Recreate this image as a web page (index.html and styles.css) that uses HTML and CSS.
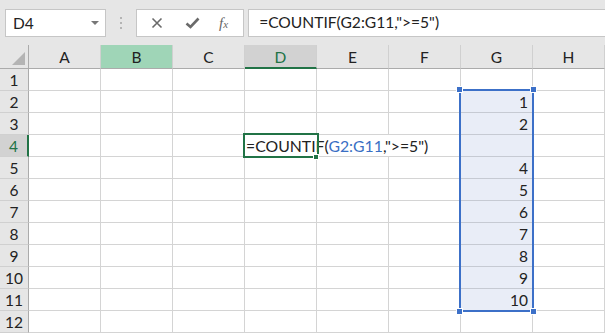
FILE: index.html
```html
<!DOCTYPE html>
<html>
<head>
<meta charset="utf-8">
<link rel="stylesheet" href="styles.css">
</head>
<body>
<div class="app">
  <div class="toolbar">
    <div class="namebox"><span class="nb-text">D4</span><span class="caret"></span></div>
    <div class="grip"><i></i><i></i><i></i></div>
    <div class="fxbox">
      <svg class="ic ic-x" width="12" height="12" viewBox="0 0 12 12"><path d="M1.5 1.5 L10.5 10.5 M10.5 1.5 L1.5 10.5" stroke="#6a6a6a" stroke-width="1.6" fill="none"/></svg>
      <svg class="ic ic-ok" width="15" height="12" viewBox="0 0 15 12"><path d="M1.5 6.5 L5.5 10 L13.5 1.5" stroke="#6a6a6a" stroke-width="2.6" fill="none"/></svg>
      <span class="fx">f<span class="fx-x">x</span></span>
    </div>
    <div class="formula">=COUNTIF(G2:G11,"&gt;=5")</div>
  </div>
  <div class="sheet">
    <div class="corner"><span class="tri"></span></div>
    <div class="ch">A</div><div class="ch ch-hl">B</div><div class="ch">C</div><div class="ch ch-sel">D</div><div class="ch">E</div><div class="ch">F</div><div class="ch">G</div><div class="ch">H</div>

    <div class="rh">1</div><div class="c"></div><div class="c"></div><div class="c"></div><div class="c"></div><div class="c"></div><div class="c"></div><div class="c"></div><div class="c"></div>
    <div class="rh">2</div><div class="c"></div><div class="c"></div><div class="c"></div><div class="c"></div><div class="c"></div><div class="c"></div><div class="c g">1</div><div class="c"></div>
    <div class="rh">3</div><div class="c"></div><div class="c"></div><div class="c"></div><div class="c"></div><div class="c"></div><div class="c"></div><div class="c g">2</div><div class="c"></div>
    <div class="rh rh-sel">4</div><div class="c"></div><div class="c"></div><div class="c"></div><div class="c"></div><div class="c"></div><div class="c"></div><div class="c g"></div><div class="c"></div>
    <div class="rh">5</div><div class="c"></div><div class="c"></div><div class="c"></div><div class="c"></div><div class="c"></div><div class="c"></div><div class="c g">4</div><div class="c"></div>
    <div class="rh">6</div><div class="c"></div><div class="c"></div><div class="c"></div><div class="c"></div><div class="c"></div><div class="c"></div><div class="c g">5</div><div class="c"></div>
    <div class="rh">7</div><div class="c"></div><div class="c"></div><div class="c"></div><div class="c"></div><div class="c"></div><div class="c"></div><div class="c g">6</div><div class="c"></div>
    <div class="rh">8</div><div class="c"></div><div class="c"></div><div class="c"></div><div class="c"></div><div class="c"></div><div class="c"></div><div class="c g">7</div><div class="c"></div>
    <div class="rh">9</div><div class="c"></div><div class="c"></div><div class="c"></div><div class="c"></div><div class="c"></div><div class="c"></div><div class="c g">8</div><div class="c"></div>
    <div class="rh">10</div><div class="c"></div><div class="c"></div><div class="c"></div><div class="c"></div><div class="c"></div><div class="c"></div><div class="c g">9</div><div class="c"></div>
    <div class="rh">11</div><div class="c"></div><div class="c"></div><div class="c"></div><div class="c"></div><div class="c"></div><div class="c"></div><div class="c g">10</div><div class="c"></div>
    <div class="rh">12</div><div class="c"></div><div class="c"></div><div class="c"></div><div class="c"></div><div class="c"></div><div class="c"></div><div class="c"></div><div class="c"></div>

    <div class="editor">=COUNTIF(<span class="ref">G2:G11</span>,"&gt;=5")</div>
    <div class="active"></div>
    <div class="fill-handle"></div>
    <div class="range">
      <span class="h h-tl"></span><span class="h h-tr"></span><span class="h h-bl"></span><span class="h h-br"></span>
    </div>
  </div>
</div>
</body>
</html>
```

FILE: styles.css
```css
* { box-sizing: border-box; }
html, body { margin: 0; padding: 0; }
body {
  width: 605px;
  height: 333px;
  overflow: hidden;
  background: #ffffff;
  font-family: Lato, "Liberation Sans", sans-serif;
  color: #222;
}
.app { width: 605px; height: 333px; overflow: hidden; }

.toolbar {
  height: 45px;
  background: #e6e6e6;
  display: flex;
  align-items: flex-start;
  padding-top: 9px;
}
.namebox {
  margin-left: 5px;
  width: 102px;
  height: 28px;
  background: #fff;
  border: 1px solid #c6c6c6;
  display: flex;
  align-items: center;
  justify-content: space-between;
  padding: 0 6px 0 7px;
  font-size: 15.5px;
}
.caret {
  width: 0; height: 0;
  border-left: 4px solid transparent;
  border-right: 4px solid transparent;
  border-top: 4px solid #777;
}
.grip {
  width: 30px;
  height: 28px;
  display: flex;
  flex-direction: column;
  align-items: center;
  justify-content: center;
  gap: 3px;
}
.grip i {
  display: block;
  width: 2px; height: 2px;
  background: #b4b4b4;
}
.fxbox {
  width: 109px;
  height: 28px;
  background: #fff;
  border: 1px solid #c6c6c6;
  display: flex;
  align-items: center;
  padding-left: 14px;
}
.ic-x { margin-right: 22px; }
.ic-ok { margin-right: 19px; }
.fx {
  font-family: "Liberation Serif", serif;
  font-style: italic;
  font-size: 15px;
  color: #666;
}
.fx-x { font-size: 11px; }
.formula {
  margin-left: 4px;
  width: 360px;
  height: 28px;
  background: #fff;
  border: 1px solid #c6c6c6;
  border-right: none;
  padding-left: 10px;
  font-size: 15.6px;
  line-height: 25px;
  white-space: nowrap;
}

.sheet {
  position: relative;
  display: grid;
  grid-template-columns: 29px repeat(8, 72px);
  grid-template-rows: 24px repeat(12, 22px);
  font-size: 15.5px;
}
.corner {
  position: relative;
  background: #e6e6e6;
  border-right: 1px solid #ababab;
  border-bottom: 1px solid #ababab;
}
.tri {
  position: absolute;
  right: 3px;
  bottom: 3px;
  width: 0; height: 0;
  border-left: 13px solid transparent;
  border-bottom: 13px solid #b4b4b4;
}
.ch {
  background: #e6e6e6;
  border-right: 1px solid #d0d0d0;
  border-bottom: 1px solid #ababab;
  display: flex;
  align-items: center;
  justify-content: center;
  padding-top: 1px;
  color: #222;
}
.ch-hl { background: #9fd5b7; }
.ch-sel {
  background: #d2d2d2;
  color: #217346;
  border-bottom: 2px solid #217346;
}
.rh {
  background: #e6e6e6;
  border-right: 1px solid #ababab;
  border-bottom: 1px solid #d0d0d0;
  display: flex;
  align-items: center;
  justify-content: center;
  color: #222;
}
.rh-sel {
  background: #d2d2d2;
  color: #217346;
  border-right: 2px solid #217346;
}
.c {
  border-right: 1px solid #d4d4d4;
  border-bottom: 1px solid #d4d4d4;
  background: #fff;
}
.g {
  background: #e9edf7;
  border-bottom-color: #c6cad3;
  text-align: right;
  padding-right: 4px;
  line-height: 22px;
}

.editor {
  position: absolute;
  left: 245px;
  top: 90px;
  width: 214px;
  height: 21px;
  background: #fff;
  padding-left: 1px;
  line-height: 21px;
  font-size: 15.8px;
  white-space: nowrap;
}
.ref { color: #3a6fc4; }
.active {
  position: absolute;
  left: 243px;
  top: 88px;
  width: 76px;
  height: 25px;
  border: 2px solid #217346;
}
.fill-handle {
  position: absolute;
  left: 313px;
  top: 109px;
  width: 6px;
  height: 6px;
  background: #217346;
  border: 1px solid #fff;
}
.range {
  position: absolute;
  left: 459px;
  top: 44px;
  width: 75px;
  height: 223px;
  border: 2px solid #3c70c8;
}
.h {
  position: absolute;
  width: 7px;
  height: 7px;
  background: #3c70c8;
  border: 1px solid #fff;
}
.h-tl { left: -5px; top: -5px; }
.h-tr { right: -5px; top: -5px; }
.h-bl { left: -5px; bottom: -5px; }
.h-br { right: -5px; bottom: -5px; }
```
